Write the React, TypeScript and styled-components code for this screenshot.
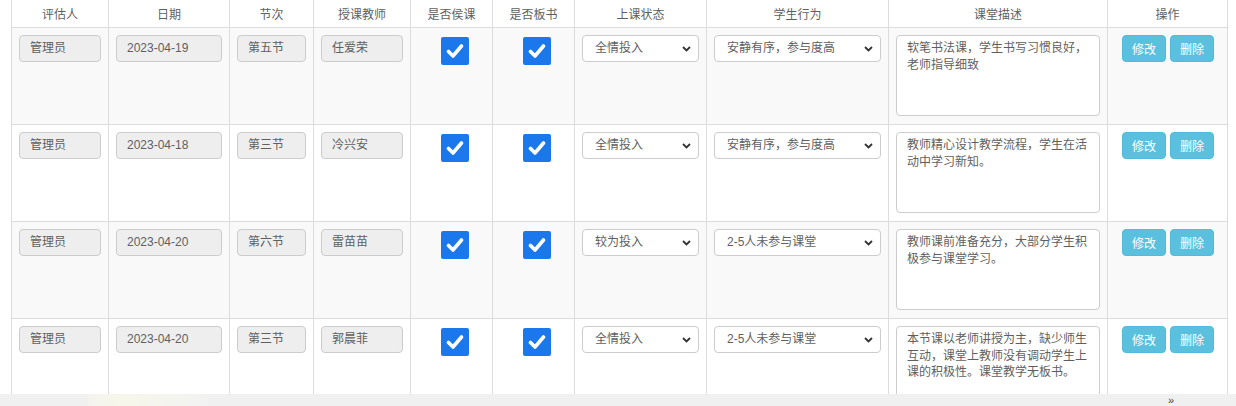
import styled, { createGlobalStyle } from 'styled-components';

const GlobalStyle = createGlobalStyle`
  html, body {
    margin: 0;
    padding: 0;
    background: #fff;
    overflow: hidden;
  }
  body {
    font-family: "Liberation Sans", "Noto Sans CJK SC", sans-serif;
    font-size: 12px;
    color: #5f5f5f;
  }
`;

interface Record {
  assessor: string;
  date: string;
  section: string;
  teacher: string;
  state: string;
  behavior: string;
  desc: string;
}

const records: Record[] = [
  {
    assessor: '管理员',
    date: '2023-04-19',
    section: '第五节',
    teacher: '任爱荣',
    state: '全情投入',
    behavior: '安静有序，参与度高',
    desc: '软笔书法课，学生书写习惯良好，老师指导细致',
  },
  {
    assessor: '管理员',
    date: '2023-04-18',
    section: '第三节',
    teacher: '冷兴安',
    state: '全情投入',
    behavior: '安静有序，参与度高',
    desc: '教师精心设计教学流程，学生在活动中学习新知。',
  },
  {
    assessor: '管理员',
    date: '2023-04-20',
    section: '第六节',
    teacher: '雷苗苗',
    state: '较为投入',
    behavior: '2-5人未参与课堂',
    desc: '教师课前准备充分，大部分学生积极参与课堂学习。',
  },
  {
    assessor: '管理员',
    date: '2023-04-20',
    section: '第三节',
    teacher: '郭晨菲',
    state: '全情投入',
    behavior: '2-5人未参与课堂',
    desc: '本节课以老师讲授为主，缺少师生互动，课堂上教师没有调动学生上课的积极性。课堂教学无板书。',
  },
];

const headers = ['评估人', '日期', '节次', '授课教师', '是否侯课', '是否板书', '上课状态', '学生行为', '课堂描述', '操作'];
const widths = [97, 121, 84, 97, 82, 82, 132, 182, 219, 120];

const Page = styled.div`
  padding-left: 11px;
`;

const Table = styled.table`
  border-collapse: collapse;
  table-layout: fixed;
  width: 1216px;
`;

const HeadCell = styled.th`
  height: 26px;
  padding: 0 0 1px;
  border: 1px solid #dcdcdc;
  border-top: none;
  font-weight: normal;
  color: #5f5f5f;
  text-align: center;
  vertical-align: middle;
`;

const Row = styled.tr<{ $striped: boolean }>`
  background: ${(p) => (p.$striped ? '#f9f9f9' : '#fff')};
`;

const Cell = styled.td<{ $center?: boolean }>`
  padding: 7px 7px 8px;
  border: 1px solid #dcdcdc;
  vertical-align: top;
  text-align: ${(p) => (p.$center ? 'center' : 'left')};
`;

const Field = styled.div`
  box-sizing: border-box;
  height: 27px;
  padding: 0 10px;
  line-height: 25px;
  border: 1px solid #ccc;
  border-radius: 4px;
  background: #eee;
  color: #5f5f5f;
  white-space: nowrap;
  overflow: hidden;
`;

const Check = styled.span`
  display: inline-flex;
  align-items: center;
  justify-content: center;
  width: 28px;
  height: 28px;
  margin: 2px 0 0 6px;
  border-radius: 2px;
  background: #1a78ec;
`;

const SelectBox = styled.div`
  position: relative;
  box-sizing: border-box;
  height: 27px;
  padding: 0 24px 0 12px;
  line-height: 25px;
  border: 1px solid #ccc;
  border-radius: 4px;
  background: #fff;
  color: #5f5f5f;
  white-space: nowrap;
`;

const Chevron = styled.svg`
  position: absolute;
  right: 7px;
  top: 10px;
`;

const Desc = styled.div`
  box-sizing: border-box;
  height: 81px;
  padding: 4px 10px;
  line-height: 16.5px;
  border: 1px solid #ccc;
  border-radius: 4px;
  background: #fff;
  color: #5f5f5f;
  overflow: hidden;
`;

const Actions = styled.div`
  display: flex;
  justify-content: center;
  gap: 4px;
  padding-left: 1px;
`;

const ActionButton = styled.button`
  box-sizing: border-box;
  width: 44px;
  height: 27px;
  padding: 0;
  border: 1px solid #52bbdb;
  border-radius: 4px;
  background: #5bc0de;
  color: #fff;
  font-family: inherit;
  font-size: 12px;
`;

const BottomBar = styled.div`
  position: fixed;
  left: 0;
  right: 0;
  bottom: 0;
  height: 12px;
  display: flex;
  align-items: center;
  background: #f0f0f0;
`;

const Thumb = styled.div`
  width: 120px;
  height: 12px;
  margin-left: 88px;
  background: linear-gradient(90deg, #f4f4ee 0%, #f7f6ea 30%, #f2f2f2 100%);
`;

const More = styled.span`
  margin-left: auto;
  margin-right: 62px;
  font-size: 11px;
  line-height: 12px;
  color: #444;
`;

const CheckMark = () => (
  <svg width="18" height="16" viewBox="0 0 18 16">
    <path d="M2.5 8.5 L7 13 L15.5 3" fill="none" stroke="#fff" strokeWidth="3.6" strokeLinecap="round" strokeLinejoin="round" />
  </svg>
);

const Select = ({ value }: { value: string }) => (
  <SelectBox>
    {value}
    <Chevron width="9" height="6" viewBox="0 0 9 6">
      <path d="M1 1 L4.5 4.5 L8 1" fill="none" stroke="#333" strokeWidth="1.8" />
    </Chevron>
  </SelectBox>
);

export default function App() {
  return (
    <Page>
      <GlobalStyle />
      <Table>
        <colgroup>
          {widths.map((w, i) => (
            <col key={i} style={{ width: w }} />
          ))}
        </colgroup>
        <thead>
          <tr>
            {headers.map((h) => (
              <HeadCell key={h}>{h}</HeadCell>
            ))}
          </tr>
        </thead>
        <tbody>
          {records.map((r, i) => (
            <Row key={i} $striped={i % 2 === 0}>
              <Cell><Field>{r.assessor}</Field></Cell>
              <Cell><Field>{r.date}</Field></Cell>
              <Cell><Field>{r.section}</Field></Cell>
              <Cell><Field>{r.teacher}</Field></Cell>
              <Cell $center><Check><CheckMark /></Check></Cell>
              <Cell $center><Check><CheckMark /></Check></Cell>
              <Cell><Select value={r.state} /></Cell>
              <Cell><Select value={r.behavior} /></Cell>
              <Cell><Desc>{r.desc}</Desc></Cell>
              <Cell>
                <Actions>
                  <ActionButton>修改</ActionButton>
                  <ActionButton>删除</ActionButton>
                </Actions>
              </Cell>
            </Row>
          ))}
        </tbody>
      </Table>
      <BottomBar>
        <Thumb />
        <More>»</More>
      </BottomBar>
    </Page>
  );
}
